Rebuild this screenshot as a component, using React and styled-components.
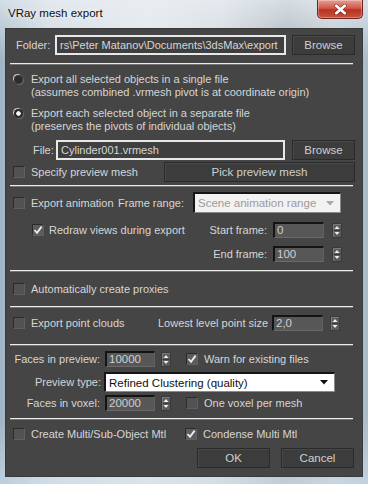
import React from "react";
import styled, { createGlobalStyle } from "styled-components";

const FONT = `"Liberation Sans", Arial, sans-serif`;

const Global = createGlobalStyle`
  html, body { margin: 0; padding: 0; }
  body { width: 368px; height: 484px; overflow: hidden; font-family: ${FONT}; background: #c8d3dc; }
  * { box-sizing: border-box; }
`;

const Window = styled.div`
  width: 368px;
  height: 484px;
  display: flex;
  flex-direction: column;
  padding: 0 5px 7px 5px;
  background:
    linear-gradient(to bottom, rgba(235,240,244,0.7) 0px, rgba(235,240,244,0) 60px, rgba(0,0,0,0) 420px, rgba(210,225,236,0.6) 484px),
    linear-gradient(to right, #9fb4c5 0%, #cfd9e0 14%, #e2e7eb 40%, #d2d9de 60%, #a5afb8 78%, #bcc6ce 90%, #a9bccb 100%);
`;

const TitleBar = styled.div`
  height: 28px;
  flex: none;
  display: flex;
  align-items: flex-start;
  justify-content: space-between;
`;

const Title = styled.div`
  padding: 7px 0 0 3px;
  font-size: 11.5px;
  color: #101010;
  text-shadow: 0 0 6px rgba(255,255,255,0.9);
`;

const CloseButton = styled.div`
  width: 46px;
  height: 19px;
  border: 1px solid #6a2520;
  border-top: none;
  border-radius: 0 0 5px 5px;
  background: linear-gradient(to bottom, #e4a093 0%, #d1594a 45%, #b8321f 55%, #c9533e 100%);
  box-shadow: inset 0 0 0 1px rgba(255,255,255,0.3);
  display: flex;
  align-items: center;
  justify-content: center;
`;

const Panel = styled.div`
  flex: 1;
  background: #454545;
  border: 1px solid #3a3a3a;
  padding: 0 7px 0 6px;
  display: flex;
  flex-direction: column;
  color: #d6d6d6;
  font-size: 11px;
`;

const Row = styled.div`
  display: flex;
  align-items: center;
  flex: none;
  height: ${(p) => p.$h || 16}px;
  margin-top: ${(p) => p.$mt || 0}px;
  padding-left: ${(p) => p.$pl || 0}px;
  padding-right: ${(p) => p.$pr || 0}px;
  justify-content: ${(p) => p.$justify || "flex-start"};
`;

const Separator = styled.div`
  flex: none;
  height: 2px;
  margin: ${(p) => p.$mt}px 2px 0 -2px;
  background: linear-gradient(to bottom, #ececec 0 1px, rgba(255,255,255,0.25) 1px 2px);
`;

const Label = styled.span`
  flex: none;
  width: ${(p) => (p.$w ? `${p.$w}px` : "auto")};
  text-align: ${(p) => p.$align || "left"};
  white-space: nowrap;
  color: #d6d6d6;
`;

const Fill = styled.span`
  flex: 1;
  white-space: nowrap;
`;

const TextField = styled.div`
  flex: none;
  width: ${(p) => p.$w}px;
  height: 20px;
  border: 2px solid #e8e8e8;
  background: #3f3f3f;
  color: #d6d6d6;
  padding: 0 0 0 3px;
  display: flex;
  align-items: center;
  white-space: nowrap;
  overflow: hidden;
  line-height: 16px;
  font-size: 11px;
`;

const Button = styled.div`
  flex: none;
  width: ${(p) => p.$w}px;
  height: 20px;
  margin-left: ${(p) => p.$ml || 0}px;
  background: #3c3c3c;
  border: 1px solid #2a2a2a;
  box-shadow: inset 1px 1px 0 #484848;
  color: #d0d0d0;
  display: flex;
  align-items: center;
  justify-content: center;
  white-space: nowrap;
  font-size: 11.5px;
`;

const RadioRow = styled.div`
  display: flex;
  align-items: flex-start;
  margin-top: ${(p) => p.$mt}px;
  padding-left: 2px;
  gap: 8px;
  line-height: 13px;
`;

const RadioCircle = styled.div`
  flex: none;
  width: 9px;
  height: 9px;
  margin-top: 2px;
  border-radius: 50%;
  background: radial-gradient(circle at 50% 50%, ${(p) => (p.$on ? "#f4f4f4 0 2px, #2a2a2a 2.5px" : "#2c2c2c 0 3px, #3a3a3a 4px")});
  box-shadow: -1px -1px 0 0 #c8c8c8, 1px 1px 0 0 #6a6a6a;
`;

const TwoLines = styled.div`
  display: flex;
  flex-direction: column;
`;

const CheckBoxBox = styled.div`
  flex: none;
  width: 12px;
  height: 12px;
  margin-left: ${(p) => p.$ml || 0}px;
  margin-right: ${(p) => p.$mr || 6}px;
  background: ${(p) => (p.$on ? "#5c5c5c" : "#525252")};
  border-top: 1px solid #2b2b2b;
  border-left: 1px solid #2b2b2b;
  border-right: 1px solid #606060;
  border-bottom: 1px solid #606060;
  display: flex;
  align-items: center;
  justify-content: center;
`;

const CheckBox = ({ on, ml, mr }) => (
  <CheckBoxBox $on={on} $ml={ml} $mr={mr}>
    {on && (
      <svg width="10" height="10" viewBox="0 0 10 10">
        <path d="M1.5 5 L4 7.8 L8.6 1.6" fill="none" stroke="#ededed" strokeWidth="1.8" />
      </svg>
    )}
  </CheckBoxBox>
);

const SpinField = styled.div`
  flex: none;
  width: ${(p) => p.$w}px;
  height: 16px;
  margin-left: ${(p) => p.$ml || 0}px;
  background: #575757;
  border-top: 2px solid #141414;
  border-left: 2px solid #141414;
  border-right: 1px solid #5f5f5f;
  border-bottom: 1px solid #6a6a6a;
  color: #cfcfcf;
  padding-left: 2px;
  display: flex;
  align-items: center;
  line-height: 13px;
  font-size: 11.5px;
`;

const ArrowsBox = styled.div`
  flex: none;
  width: 10px;
  height: 15px;
  margin-left: ${(p) => p.$ml || 0}px;
  background: #5a5a5a;
  border: 1px solid #3a3a3a;
  box-shadow: inset 1px 1px 0 #7a7a7a;
  display: flex;
  align-items: center;
  justify-content: center;
`;

const Arrows = ({ ml }) => (
  <ArrowsBox $ml={ml}>
    <svg width="8" height="13" viewBox="0 0 8 13">
      <path d="M1.5 5 L4 2 L6.5 5 Z" fill="#eeeeee" />
      <path d="M0.5 6.5 H7.5" stroke="#3a3a3a" strokeWidth="1" />
      <path d="M1.5 8 L4 11 L6.5 8 Z" fill="#eeeeee" />
    </svg>
  </ArrowsBox>
);

const Spinner = ({ value, w, ml, gap }) => (
  <>
    <SpinField $w={w} $ml={ml}>{value}</SpinField>
    <Arrows ml={gap} />
  </>
);

const Dropdown = styled.div`
  flex: none;
  width: ${(p) => p.$w}px;
  height: ${(p) => p.$h}px;
  margin-left: ${(p) => p.$ml || 0}px;
  background: ${(p) => (p.$disabled ? "#f2f2f2" : "#ffffff")};
  color: ${(p) => (p.$disabled ? "#9c9c9c" : "#111111")};
  border-top: 2px solid #151515;
  border-left: 2px solid #151515;
  border-right: 1px solid #8a8a8a;
  border-bottom: 1px solid #8a8a8a;
  display: flex;
  align-items: center;
  padding: 0 6px 0 3px;
  white-space: nowrap;
  font-size: 11.5px;
`;

const DropArrow = ({ color }) => (
  <svg width="8" height="5" viewBox="0 0 8 5" style={{ marginLeft: "auto" }}>
    <path d="M0 0 H8 L4 4.5 Z" fill={color} />
  </svg>
);

const Cell = styled.div`
  flex: none;
  width: ${(p) => p.$w}px;
  display: flex;
  align-items: center;
  white-space: nowrap;
`;

export default function App() {
  return (
    <>
      <Global />
      <Window>
        <TitleBar>
          <Title>VRay mesh export</Title>
          <CloseButton>
            <svg width="13" height="11" viewBox="0 0 13 11">
              <path d="M2 1.5 L11 9.5 M11 1.5 L2 9.5" stroke="#5a1a14" strokeWidth="4" strokeLinecap="round" opacity="0.5" />
              <path d="M2.2 1.8 L10.8 9.2 M10.8 1.8 L2.2 9.2" stroke="#ffffff" strokeWidth="2.6" strokeLinecap="round" />
            </svg>
          </CloseButton>
        </TitleBar>
        <Panel>
          <Row $h={20} $mt={6} $pl={4}>
            <Label $w={39}>Folder:</Label>
            <TextField $w={231}>rs\Peter Matanov\Documents\3dsMax\export</TextField>
            <Button $w={63} $ml={6}>Browse</Button>
          </Row>
          <Separator $mt={8} />

          <RadioRow $mt={8}>
            <RadioCircle />
            <TwoLines>
              <span>Export all selected objects in a single file</span>
              <span>(assumes combined .vrmesh pivot is at coordinate origin)</span>
            </TwoLines>
          </RadioRow>
          <RadioRow $mt={8}>
            <RadioCircle $on />
            <TwoLines>
              <span>Export each selected object in a separate file</span>
              <span>(preserves the pivots of individual objects)</span>
            </TwoLines>
          </RadioRow>

          <Row $h={20} $mt={7} $pl={21}>
            <Label $w={23}>File:</Label>
            <TextField $w={229}>Cylinder001.vrmesh</TextField>
            <Button $w={63} $ml={7}>Browse</Button>
          </Row>

          <Row $h={20} $mt={2} $pl={1}>
            <CheckBox />
            <Fill>Specify preview mesh</Fill>
            <Button $w={191}>Pick preview mesh</Button>
          </Row>
          <Separator $mt={3} />

          <Row $h={21} $mt={5} $pl={1}>
            <CheckBox />
            <Label $w={87}>Export animation</Label>
            <Label $w={75}>Frame range:</Label>
            <Dropdown $w={148} $h={21} $disabled>
              Scene animation range
              <DropArrow color="#a8a8a8" />
            </Dropdown>
          </Row>

          <Row $h={16} $mt={9} $pl={20}>
            <CheckBox on mr={5} />
            <Fill>Redraw views during export</Fill>
            <Label $align="right">Start frame:</Label>
            <Spinner value="0" w={51} ml={6} gap={8} />
            <Cell $w={13} />
          </Row>
          <Row $h={16} $mt={8}>
            <Fill />
            <Label $align="right">End frame:</Label>
            <Spinner value="100" w={51} ml={6} gap={8} />
            <Cell $w={13} />
          </Row>
          <Separator $mt={8} />

          <Row $h={16} $mt={9} $pl={1}>
            <CheckBox />
            <Fill>Automatically create proxies</Fill>
          </Row>
          <Separator $mt={9} />

          <Row $h={16} $mt={7} $pl={1}>
            <CheckBox />
            <Label $w={127}>Export point clouds</Label>
            <Label>Lowest level point size</Label>
            <Fill />
            <Spinner value="2,0" w={51} ml={0} gap={7} />
            <Cell $w={15} />
          </Row>
          <Separator $mt={13} />

          <Row $h={16} $mt={5}>
            <Label $w={88} $align="right">Faces in preview:</Label>
            <Spinner value="10000" w={50} ml={5} gap={6} />
            <CheckBox on ml={15} />
            <Fill>Warn for existing files</Fill>
          </Row>
          <Row $h={20} $mt={5}>
            <Label $w={89} $align="right">Preview type:</Label>
            <Dropdown $w={231} $h={20} $ml={3}>
              Refined Clustering (quality)
              <DropArrow color="#111111" />
            </Dropdown>
          </Row>
          <Row $h={16} $mt={3}>
            <Label $w={88} $align="right">Faces in voxel:</Label>
            <Spinner value="20000" w={50} ml={5} gap={6} />
            <CheckBox ml={15} />
            <Fill>One voxel per mesh</Fill>
          </Row>
          <Separator $mt={7} />

          <Row $h={16} $mt={6} $pl={1}>
            <Cell $w={172}>
              <CheckBox />
              <span>Create Multi/Sub-Object Mtl</span>
            </Cell>
            <CheckBox on />
            <Fill>Condense Multi Mtl</Fill>
          </Row>

          <Row $h={20} $mt={6} $justify="flex-end" $pr={1}>
            <Button $w={73}>OK</Button>
            <Button $w={73} $ml={11}>Cancel</Button>
          </Row>
        </Panel>
      </Window>
    </>
  );
}
